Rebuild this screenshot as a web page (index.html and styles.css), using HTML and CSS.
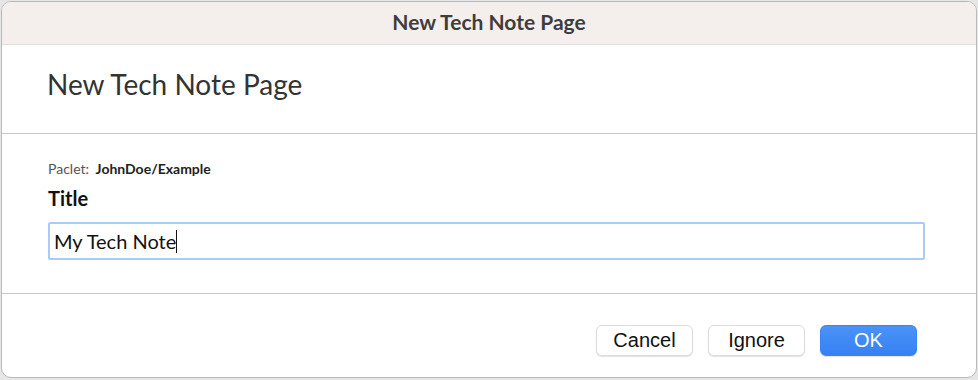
FILE: index.html
```html
<!DOCTYPE html>
<html lang="en">
<head>
  <meta charset="UTF-8">
  <title>New Tech Note Page</title>
  <link rel="stylesheet" href="styles.css">
</head>
<body>

  <div class="window">
    <div class="titlebar">New Tech Note Page</div>

    <div class="header">
      <h1>New Tech Note Page</h1>
    </div>

    <div class="form">
      <div class="paclet"><span class="label">Paclet:</span> <span class="name">JohnDoe/Example</span></div>
      <div class="field-label">Title</div>
      <div class="input">My Tech Note<span class="caret"></span></div>
    </div>

    <div class="buttons">
      <button class="btn">Cancel</button>
      <button class="btn">Ignore</button>
      <button class="btn primary">OK</button>
    </div>
  </div>

</body>
</html>
```

FILE: styles.css
```css
body {
  margin: 0;
  background: #e6e6e6;
  font-family: Lato, "Noto Sans", sans-serif;
  color: #333;
}

.window {
  margin: 1px 1px 1px 1px;
  height: 377px;
  box-sizing: border-box;
  border: 1px solid #b9b9b9;
  border-radius: 10px;
  background: #fff;
  overflow: hidden;
  display: flex;
  flex-direction: column;
}

.titlebar {
  height: 42px;
  line-height: 40px;
  background: #f4efec;
  border-bottom: 1px solid #e2dedb;
  text-align: center;
  font-weight: bold;
  font-size: 21px;
  color: #3d3d3d;
}

.header {
  height: 89px;
  box-sizing: border-box;
  border-bottom: 1px solid #c6c6c6;
  padding: 0 0 10px 45px;
  display: flex;
  align-items: center;
}

h1 {
  margin: 0;
  font-size: 28px;
  font-weight: normal;
  color: #333;
}

.form {
  height: 160px;
  box-sizing: border-box;
  border-bottom: 1px solid #c6c6c6;
  padding: 26px 51px 0 46px;
}

.paclet {
  font-size: 14px;
}

.paclet .label {
  color: #555;
  margin-right: 3px;
}

.paclet .name {
  font-weight: bold;
  color: #222;
}

.field-label {
  margin-top: 9px;
  font-size: 20px;
  font-weight: bold;
  color: #111;
}

.input {
  margin-top: 12px;
  height: 38px;
  box-sizing: border-box;
  border: 2px solid #a9cbf6;
  border-radius: 2px;
  padding-left: 4px;
  display: flex;
  align-items: center;
  font-size: 20px;
  color: #111;
}

.caret {
  width: 1px;
  height: 23px;
  background: #111;
}

.buttons {
  flex: 1;
  display: flex;
  justify-content: flex-end;
  align-items: flex-start;
  gap: 15px;
  padding: 31px 59px 0 0;
}

.btn {
  width: 97px;
  height: 31px;
  border: 1px solid #dcdcdc;
  border-radius: 6px;
  background: #fff;
  box-shadow: 0 1px 1px rgba(0, 0, 0, 0.12);
  font-family: "Liberation Sans", Arial, sans-serif;
  font-size: 20px;
  color: #111;
}

.btn.primary {
  border-color: #3884f4;
  background: linear-gradient(#4a93f7, #3680f3);
  color: #fff;
}
```
